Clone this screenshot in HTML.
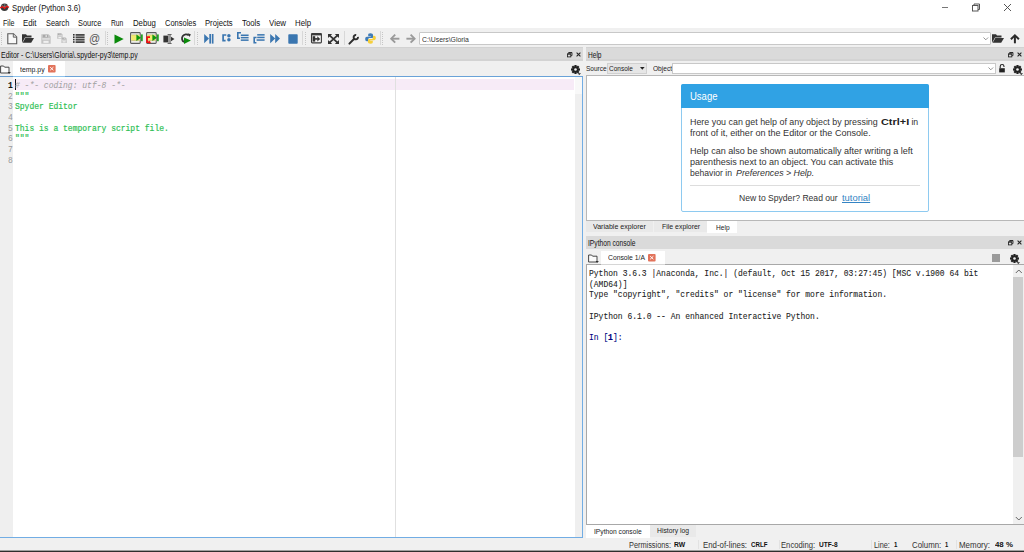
<!DOCTYPE html>
<html><head><meta charset="utf-8"><title>Spyder (Python 3.6)</title>
<style>
html,body{margin:0;padding:0;}
body{width:1024px;height:552px;overflow:hidden;position:relative;background:#f0f0f0;font-family:"Liberation Sans",sans-serif;}
.t{position:absolute;white-space:pre;line-height:1;transform-origin:0 0;}
.r{position:absolute;}
svg.r{overflow:visible;}
</style></head><body>
<div class="titlebar">
<div class="r" style="left:0px;top:0px;width:1024px;height:28px;background:#ffffff;"></div>
<svg class="r" style="left:0px;top:3px" width="10" height="9" viewBox="0 0 10 9"><circle cx="4.5" cy="4.2" r="3.8" fill="#3a3a3a"/><path d="M1.5 2.2 L4.8 4.2 M8 2.2 L4.8 4.2 M4.8 0.5 V4.2" stroke="#bbb" stroke-width="0.5"/><path d="M0 5 L2.6 3.6 L4.6 5.4 L6.6 3.2 L9 4.4" stroke="#e81818" stroke-width="1.3" fill="none"/></svg>
<div class="t" style="left:12.30px;top:4px;font-size:8.60px;color:#111;transform:scaleX(0.8969);">Spyder (Python 3.6)</div>
<div class="r" style="left:941.6px;top:6.5px;width:6.4px;height:1px;background:#777;"></div>
<svg class="r" style="left:971px;top:3px" width="10" height="9" viewBox="0 0 10 9"><rect x="1.5" y="2.5" width="5.5" height="5.5" fill="none" stroke="#555" stroke-width="1"/><path d="M3 2.5 V1 H8.5 V6.5 H7" fill="none" stroke="#555" stroke-width="1"/></svg>
<svg class="r" style="left:1003px;top:3px" width="9" height="9" viewBox="0 0 9 9"><path d="M1 1 L8 8 M8 1 L1 8" stroke="#444" stroke-width="0.9"/></svg>
</div>
<div class="menubar">
<div class="t" style="left:2.60px;top:19px;font-size:8.50px;color:#111;transform:scaleX(0.8323);">File</div>
<div class="t" style="left:23.40px;top:19px;font-size:8.50px;color:#111;transform:scaleX(0.9217);">Edit</div>
<div class="t" style="left:45.70px;top:19px;font-size:8.50px;color:#111;transform:scaleX(0.8614);">Search</div>
<div class="t" style="left:77.60px;top:19px;font-size:8.50px;color:#111;transform:scaleX(0.8688);">Source</div>
<div class="t" style="left:110.60px;top:19px;font-size:8.50px;color:#111;transform:scaleX(0.7888);">Run</div>
<div class="t" style="left:132.80px;top:19px;font-size:8.50px;color:#111;transform:scaleX(0.9142);">Debug</div>
<div class="t" style="left:164.80px;top:19px;font-size:8.50px;color:#111;transform:scaleX(0.8833);">Consoles</div>
<div class="t" style="left:204.90px;top:19px;font-size:8.50px;color:#111;transform:scaleX(0.9021);">Projects</div>
<div class="t" style="left:241.60px;top:19px;font-size:8.50px;color:#111;transform:scaleX(0.9172);">Tools</div>
<div class="t" style="left:268.60px;top:19px;font-size:8.50px;color:#111;transform:scaleX(0.9304);">View</div>
<div class="t" style="left:294.70px;top:19px;font-size:8.50px;color:#111;transform:scaleX(0.9209);">Help</div>
</div>
<div class="toolbar">
<div class="r" style="left:0px;top:28px;width:1024px;height:19px;background:#f0f0f0;"></div>
<svg class="r" style="left:1px;top:31px" width="2" height="14" viewBox="0 0 2 14"><rect x="0" y="1" width="1" height="1" fill="#c6c6c6"/><rect x="0" y="3" width="1" height="1" fill="#c6c6c6"/><rect x="0" y="5" width="1" height="1" fill="#c6c6c6"/><rect x="0" y="7" width="1" height="1" fill="#c6c6c6"/><rect x="0" y="9" width="1" height="1" fill="#c6c6c6"/><rect x="0" y="11" width="1" height="1" fill="#c6c6c6"/><rect x="0" y="13" width="1" height="1" fill="#c6c6c6"/></svg>
<svg class="r" style="left:7px;top:33px" width="11" height="12" viewBox="0 0 11 12"><path d="M0.8 0.8 H6.5 L9.7 4 V10.7 H0.8 Z" fill="#f8f8f8" stroke="#585858" stroke-width="1.1"/><path d="M6.3 0.8 V4.2 H9.7" fill="#dcdcdc" stroke="#585858" stroke-width="0.9"/></svg>
<svg class="r" style="left:22px;top:34px" width="12" height="9" viewBox="0 0 12 9"><path d="M0 0.3 H4 L5 1.5 H9.5 V3.5 H3 L0 8.7 Z" fill="#333"/><path d="M3.3 4 H12 L9.2 8.7 H0.6 Z" fill="#333"/></svg>
<svg class="r" style="left:40.5px;top:34px" width="10" height="10" viewBox="0 0 10 10"><path d="M0.3 0.3 H7.6 L9.7 2.4 V9.7 H0.3 Z" fill="#c4c4c4"/><rect x="2" y="0.8" width="5" height="2.6" fill="#a9a9a9"/><rect x="4.6" y="1.1" width="1.1" height="1.9" fill="#f2f2f2"/><rect x="1.2" y="4.4" width="7.6" height="1.1" fill="#ececec"/><rect x="2.4" y="6.8" width="5.2" height="2.1" fill="#f0f0f0"/></svg>
<svg class="r" style="left:57px;top:33.2px" width="10" height="11" viewBox="0 0 10 11"><g transform="translate(0 0) scale(0.58)"><path d="M0.3 0.3 H7.6 L9.7 2.4 V9.7 H0.3 Z" fill="#c4c4c4"/><rect x="2" y="0.8" width="5" height="2.6" fill="#a9a9a9"/><rect x="4.6" y="1.1" width="1.1" height="1.9" fill="#f2f2f2"/><rect x="1.2" y="4.4" width="7.6" height="1.1" fill="#ececec"/><rect x="2.4" y="6.8" width="5.2" height="2.1" fill="#f0f0f0"/></g><g transform="translate(4.2 4.3) scale(0.58)"><path d="M0.3 0.3 H7.6 L9.7 2.4 V9.7 H0.3 Z" fill="#c4c4c4"/><rect x="2" y="0.8" width="5" height="2.6" fill="#a9a9a9"/><rect x="4.6" y="1.1" width="1.1" height="1.9" fill="#f2f2f2"/><rect x="1.2" y="4.4" width="7.6" height="1.1" fill="#ececec"/><rect x="2.4" y="6.8" width="5.2" height="2.1" fill="#f0f0f0"/></g></svg>
<svg class="r" style="left:72.5px;top:34px" width="12" height="9" viewBox="0 0 12 9"><rect x="0" y="0" width="1.6" height="1.6" fill="#333"/><rect x="2.6" y="0" width="9" height="1.8" fill="#484848"/><rect x="0" y="2.4" width="1.6" height="1.6" fill="#333"/><rect x="2.6" y="2.4" width="9" height="1.8" fill="#484848"/><rect x="0" y="4.8" width="1.6" height="1.6" fill="#333"/><rect x="2.6" y="4.8" width="9" height="1.8" fill="#484848"/><rect x="0" y="7.2" width="1.6" height="1.6" fill="#333"/><rect x="2.6" y="7.2" width="9" height="1.8" fill="#484848"/></svg>
<div class="t" style="left:89.30px;top:33px;font-size:12.50px;color:#5a5a5a;transform:scaleX(0.8826);">@</div>
<div class="r" style="left:104.5px;top:31px;width:1px;height:14px;background:#d8d8d8;"></div>
<svg class="r" style="left:107px;top:31px" width="2" height="14" viewBox="0 0 2 14"><rect x="0" y="1" width="1" height="1" fill="#c6c6c6"/><rect x="0" y="3" width="1" height="1" fill="#c6c6c6"/><rect x="0" y="5" width="1" height="1" fill="#c6c6c6"/><rect x="0" y="7" width="1" height="1" fill="#c6c6c6"/><rect x="0" y="9" width="1" height="1" fill="#c6c6c6"/><rect x="0" y="11" width="1" height="1" fill="#c6c6c6"/><rect x="0" y="13" width="1" height="1" fill="#c6c6c6"/></svg>
<svg class="r" style="left:113.5px;top:33.5px" width="10" height="10" viewBox="0 0 10 10"><path d="M0.5 0.4 L9.7 5 L0.5 9.7 Z" fill="#0b8a0b"/></svg>
<svg class="r" style="left:129.5px;top:32px" width="13" height="12" viewBox="0 0 13 12"><rect x="0.6" y="0.6" width="9.6" height="10.8" rx="0.8" fill="#f4f4f4" stroke="#5a5a5a" stroke-width="1.1"/><rect x="1.2" y="3" width="8.4" height="5.6" fill="#f2ea6e"/><rect x="1.2" y="2.6" width="8.4" height="0.6" fill="#b8b060"/><rect x="1.2" y="8.5" width="8.4" height="0.6" fill="#b8b060"/><path d="M6.4 2.6 L11 5.8 L6.4 9 Z" fill="#0f960f"/><rect x="11.1" y="2.4" width="1.6" height="6.8" fill="#0f960f"/></svg>
<svg class="r" style="left:146px;top:32px" width="13" height="12" viewBox="0 0 13 12"><rect x="0.6" y="0.6" width="9.6" height="10.8" rx="0.8" fill="#f4f4f4" stroke="#5a5a5a" stroke-width="1.1"/><rect x="1.2" y="3" width="8.4" height="5.6" fill="#f2ea6e"/><rect x="1.2" y="2.6" width="8.4" height="0.6" fill="#b8b060"/><rect x="1.2" y="8.5" width="8.4" height="0.6" fill="#b8b060"/><path d="M6.4 2.6 L11 5.8 L6.4 9 Z" fill="#0f960f"/><rect x="11.1" y="2.4" width="1.6" height="6.8" fill="#0f960f"/><path d="M4 5.2 H1.1 V10.2 H3.2" fill="none" stroke="#f41010" stroke-width="1.7"/><path d="M3 8.5 L5 10.2 L3 11.9 Z" fill="#f41010"/></svg>
<svg class="r" style="left:162.5px;top:33.5px" width="12" height="10" viewBox="0 0 12 10"><rect x="0.4" y="1.6" width="5" height="6.8" fill="#333"/><rect x="5.2" y="0.5" width="2.8" height="9" fill="#9a9a9a"/><rect x="4.6" y="0" width="4" height="1" fill="#666"/><rect x="4.6" y="9" width="4" height="1" fill="#666"/><path d="M8 2.8 L11.5 5 L8 7.2 Z" fill="#333"/></svg>
<svg class="r" style="left:180.5px;top:32.5px" width="11" height="12" viewBox="0 0 11 12"><path d="M7.8 2.4 A4.1 4.1 0 1 0 3.0 9.0" fill="none" stroke="#333" stroke-width="1.8"/><path d="M6.6 0.3 L9.8 1.2 L8.6 4 Z" fill="#333"/><path d="M3 4.5 L9.9 7.6 L3 11 Z" fill="#0b8a0b"/></svg>
<div class="r" style="left:194.3px;top:31px;width:1px;height:14px;background:#d8d8d8;"></div>
<svg class="r" style="left:197px;top:31px" width="2" height="14" viewBox="0 0 2 14"><rect x="0" y="1" width="1" height="1" fill="#c6c6c6"/><rect x="0" y="3" width="1" height="1" fill="#c6c6c6"/><rect x="0" y="5" width="1" height="1" fill="#c6c6c6"/><rect x="0" y="7" width="1" height="1" fill="#c6c6c6"/><rect x="0" y="9" width="1" height="1" fill="#c6c6c6"/><rect x="0" y="11" width="1" height="1" fill="#c6c6c6"/><rect x="0" y="13" width="1" height="1" fill="#c6c6c6"/></svg>
<svg class="r" style="left:203.5px;top:34px" width="10" height="10" viewBox="0 0 10 10"><path d="M0.2 0 L5 4.6 L0.2 9.2 Z" fill="#3a76b0"/><rect x="5.3" y="0" width="1.7" height="9.6" fill="#3a76b0"/><rect x="7.8" y="0" width="1.7" height="9.6" fill="#3a76b0"/></svg>
<svg class="r" style="left:221.5px;top:34px" width="9" height="8" viewBox="0 0 9 8"><path d="M4.3 1 H1.1 V6.6 H3.6" fill="none" stroke="#3a76b0" stroke-width="1.7"/><circle cx="6.9" cy="1.8" r="1.75" fill="#3a76b0"/><circle cx="6.9" cy="5.8" r="1.75" fill="#3a76b0"/></svg>
<svg class="r" style="left:236.5px;top:32px" width="12" height="10" viewBox="0 0 12 10"><path d="M4 0.8 H0.8 V6.3 H3" fill="none" stroke="#3a76b0" stroke-width="1.6"/><rect x="3.8" y="2.5" width="7.8" height="1.5" fill="#3a76b0"/><rect x="3.8" y="4.9" width="7.8" height="1.5" fill="#3a76b0"/><rect x="3.8" y="7.4" width="7.8" height="1.5" fill="#3a76b0"/></svg>
<svg class="r" style="left:253px;top:34px" width="12" height="10" viewBox="0 0 12 10"><rect x="4.2" y="0.1" width="7.4" height="1.5" fill="#3a76b0"/><rect x="4.2" y="2.7" width="7.4" height="1.5" fill="#3a76b0"/><rect x="3.6" y="5.3" width="8" height="1.5" fill="#3a76b0"/><path d="M3.6 3.5 H1.2 V8.8 H3.4" fill="none" stroke="#3a76b0" stroke-width="1.6"/></svg>
<svg class="r" style="left:270px;top:34px" width="10" height="10" viewBox="0 0 10 10"><path d="M0.2 0 L5.2 4.6 L0.2 9.2 Z M5.2 0 L10 4.6 L5.2 9.2 Z" fill="#3a76b0"/></svg>
<svg class="r" style="left:287.5px;top:33.7px" width="10" height="10" viewBox="0 0 10 10"><rect x="0.3" y="0.2" width="9.4" height="9.6" rx="0.8" fill="#3a76b0"/></svg>
<div class="r" style="left:301.6px;top:31px;width:1px;height:14px;background:#d8d8d8;"></div>
<svg class="r" style="left:304.5px;top:31px" width="2" height="14" viewBox="0 0 2 14"><rect x="0" y="1" width="1" height="1" fill="#c6c6c6"/><rect x="0" y="3" width="1" height="1" fill="#c6c6c6"/><rect x="0" y="5" width="1" height="1" fill="#c6c6c6"/><rect x="0" y="7" width="1" height="1" fill="#c6c6c6"/><rect x="0" y="9" width="1" height="1" fill="#c6c6c6"/><rect x="0" y="11" width="1" height="1" fill="#c6c6c6"/><rect x="0" y="13" width="1" height="1" fill="#c6c6c6"/></svg>
<svg class="r" style="left:310.5px;top:32.8px" width="11" height="11" viewBox="0 0 11 11"><rect x="0.5" y="0.5" width="9.9" height="9.4" rx="0.8" fill="#f2f2f2" stroke="#3a3a3a" stroke-width="1.1"/><rect x="0.5" y="0.5" width="9.9" height="1.9" fill="#3a3a3a"/><rect x="1.6" y="3.2" width="2.6" height="5.4" fill="#303030"/><rect x="4" y="5.1" width="2.8" height="1.6" fill="#303030"/><path d="M6.3 3.2 L9.2 5.9 L6.3 8.6 Z" fill="#303030"/></svg>
<svg class="r" style="left:327.8px;top:33.8px" width="11" height="10" viewBox="0 0 11 10"><path d="M1.5 1.4 L9.5 8.6 M9.5 1.4 L1.5 8.6" stroke="#333" stroke-width="1.8"/><path d="M0 0 H4.2 L0 3.9 Z M11 0 H6.8 L11 3.9 Z M0 10 H4.2 L0 6.1 Z M11 10 H6.8 L11 6.1 Z" fill="#333"/></svg>
<div class="r" style="left:343.5px;top:31px;width:1px;height:14px;background:#d8d8d8;"></div>
<svg class="r" style="left:347.8px;top:33.8px" width="11" height="11" viewBox="0 0 11 11"><path d="M1.4 9.6 L6.2 4.8" stroke="#2e2e2e" stroke-width="2" stroke-linecap="round"/><path d="M9.97 2.82 A2.2 2.2 0 1 1 8.18 1.03" fill="none" stroke="#2e2e2e" stroke-width="1.9"/></svg>
<svg class="r" style="left:364.5px;top:33.2px" width="11" height="11" viewBox="0 0 11 11"><path d="M5.4 0.3 C3.3 0.3 3.2 1.2 3.2 2 V3.3 H5.8 V3.8 H1.9 C0.9 3.8 0.2 4.6 0.2 6 C0.2 7.5 0.9 8.2 1.8 8.2 H3 V6.6 C3 5.6 3.8 5 4.8 5 H7.1 C7.9 5 8 4.4 8 3.7 V2 C8 1 7.2 0.3 5.4 0.3 Z" fill="#3f7cb8"/><path d="M5.6 10.7 C7.7 10.7 7.8 9.8 7.8 9 V7.7 H5.2 V7.2 H9.1 C10.1 7.2 10.8 6.4 10.8 5 C10.8 3.5 10.1 2.8 9.2 2.8 H8 V4.4 C8 5.4 7.2 6 6.2 6 H3.9 C3.1 6 3 6.6 3 7.3 V9 C3 10 3.8 10.7 5.6 10.7 Z" fill="#f5cf3c"/></svg>
<div class="r" style="left:379.8px;top:31px;width:1px;height:14px;background:#d8d8d8;"></div>
<svg class="r" style="left:382.3px;top:31px" width="2" height="14" viewBox="0 0 2 14"><rect x="0" y="1" width="1" height="1" fill="#c6c6c6"/><rect x="0" y="3" width="1" height="1" fill="#c6c6c6"/><rect x="0" y="5" width="1" height="1" fill="#c6c6c6"/><rect x="0" y="7" width="1" height="1" fill="#c6c6c6"/><rect x="0" y="9" width="1" height="1" fill="#c6c6c6"/><rect x="0" y="11" width="1" height="1" fill="#c6c6c6"/><rect x="0" y="13" width="1" height="1" fill="#c6c6c6"/></svg>
<svg class="r" style="left:389.5px;top:34.3px" width="10" height="10" viewBox="0 0 10 10"><path d="M9.4 4.7 H2" stroke="#9a9a9a" stroke-width="1.9"/><path d="M5.2 0.7 L1.2 4.7 L5.2 8.7" fill="none" stroke="#9a9a9a" stroke-width="1.9"/></svg>
<svg class="r" style="left:405.5px;top:34.3px" width="10" height="10" viewBox="0 0 10 10"><path d="M0.4 4.7 H7.8" stroke="#9a9a9a" stroke-width="1.9"/><path d="M4.6 0.7 L8.6 4.7 L4.6 8.7" fill="none" stroke="#9a9a9a" stroke-width="1.9"/></svg>
<div class="r" style="left:419px;top:32px;width:572px;height:13px;background:#fff;border:1px solid #c8c8c8;box-sizing:border-box;border-radius:1px;"></div>
<div class="t" style="left:422.00px;top:36px;font-size:8.00px;color:#333;transform:scaleX(0.8578);">C:\Users\Gloria</div>
<svg class="r" style="left:982.5px;top:37px" width="6" height="4" viewBox="0 0 6 4"><path d="M0.5 0.5 L2.8 2.8 L5.1 0.5" fill="none" stroke="#777" stroke-width="0.8"/></svg>
<svg class="r" style="left:992px;top:33.8px" width="12" height="9" viewBox="0 0 12 9"><path d="M0 0.3 H4 L5 1.5 H9.5 V3.5 H3 L0 8.7 Z" fill="#333"/><path d="M3.3 4 H12 L9.2 8.7 H0.6 Z" fill="#333"/></svg>
<svg class="r" style="left:1009.8px;top:34px" width="10" height="10" viewBox="0 0 10 10"><path d="M4.9 9.3 V1.8" stroke="#2a2a2a" stroke-width="2"/><path d="M0.9 5.3 L4.9 1.3 L8.9 5.3" fill="none" stroke="#2a2a2a" stroke-width="2"/></svg>
</div>
<div class="editor-pane">
<div class="r" style="left:0px;top:47px;width:583px;height:13.5px;background:#dadada;"></div>
<div class="r" style="left:0px;top:47px;width:583px;height:1px;background:#d2d2d2;"></div>
<div class="r" style="left:0px;top:59px;width:583px;height:1.5px;background:#d3d3d3;"></div>
<div class="t" style="left:0.70px;top:52px;font-size:8.20px;color:#111;transform:scaleX(0.8486);">Editor - C:\Users\Gloria\.spyder-py3\temp.py</div>
<svg class="r" style="left:566.5px;top:52px" width="6" height="6" viewBox="0 0 6 6"><rect x="0.5" y="1.9" width="3.3" height="3" fill="none" stroke="#222" stroke-width="0.85"/><rect x="0.5" y="1.6" width="3.3" height="0.9" fill="#222"/><path d="M1.7 1.5 V0.5 H5 V3.6 H3.9" fill="none" stroke="#222" stroke-width="0.85"/><rect x="1.7" y="0.3" width="3.3" height="0.9" fill="#222"/></svg>
<svg class="r" style="left:576.0px;top:52px" width="6" height="6" viewBox="0 0 6 6"><path d="M0.6 0.6 L4.4 4.4 M4.4 0.6 L0.6 4.4" stroke="#222" stroke-width="1.05"/></svg>
</div>
<div class="help-pane">
<div class="r" style="left:585.5px;top:47px;width:438.5px;height:13.5px;background:#dadada;"></div>
<div class="r" style="left:585.5px;top:47px;width:438.5px;height:1px;background:#d2d2d2;"></div>
<div class="r" style="left:585.5px;top:59px;width:438.5px;height:1.5px;background:#d3d3d3;"></div>
<div class="t" style="left:588.00px;top:52px;font-size:8.20px;color:#111;transform:scaleX(0.8005);">Help</div>
<svg class="r" style="left:1007.5px;top:52px" width="6" height="6" viewBox="0 0 6 6"><rect x="0.5" y="1.9" width="3.3" height="3" fill="none" stroke="#222" stroke-width="0.85"/><rect x="0.5" y="1.6" width="3.3" height="0.9" fill="#222"/><path d="M1.7 1.5 V0.5 H5 V3.6 H3.9" fill="none" stroke="#222" stroke-width="0.85"/><rect x="1.7" y="0.3" width="3.3" height="0.9" fill="#222"/></svg>
<svg class="r" style="left:1017.0px;top:52px" width="6" height="6" viewBox="0 0 6 6"><path d="M0.6 0.6 L4.4 4.4 M4.4 0.6 L0.6 4.4" stroke="#222" stroke-width="1.05"/></svg>
</div>
<div class="editor-pane">
<svg class="r" style="left:0px;top:64.5px" width="10" height="9" viewBox="0 0 10 9"><path d="M0.6 1 H3.6 L4.6 2.2 H9 V8 H0.6 Z" fill="#fafafa" stroke="#333" stroke-width="0.9"/><path d="M7.6 7.3 L9.3 8.8 L10.9 7.3 Z" fill="#111"/></svg>
<div class="r" style="left:13px;top:61px;width:52px;height:15.5px;background:#ffffff;"></div>
<div class="t" style="left:20.30px;top:66px;font-size:8.00px;color:#222;transform:scaleX(0.8644);">temp.py</div>
<svg class="r" style="left:48px;top:65.2px" width="8" height="8" viewBox="0 0 8 8"><rect x="0" y="0" width="7.6" height="7.4" rx="1" fill="#e2735b"/><path d="M2.2 2.2 L5.4 5.2 M5.4 2.2 L2.2 5.2" stroke="#fff" stroke-width="1"/></svg>
<svg class="r" style="left:570.5px;top:64.6px" width="11" height="11" viewBox="0 0 11 11"><rect x="3.4" y="0" width="2.2" height="2.4" fill="#222" transform="rotate(0 4.5 4.5)"/><rect x="3.4" y="0" width="2.2" height="2.4" fill="#222" transform="rotate(45 4.5 4.5)"/><rect x="3.4" y="0" width="2.2" height="2.4" fill="#222" transform="rotate(90 4.5 4.5)"/><rect x="3.4" y="0" width="2.2" height="2.4" fill="#222" transform="rotate(135 4.5 4.5)"/><rect x="3.4" y="0" width="2.2" height="2.4" fill="#222" transform="rotate(180 4.5 4.5)"/><rect x="3.4" y="0" width="2.2" height="2.4" fill="#222" transform="rotate(225 4.5 4.5)"/><rect x="3.4" y="0" width="2.2" height="2.4" fill="#222" transform="rotate(270 4.5 4.5)"/><rect x="3.4" y="0" width="2.2" height="2.4" fill="#222" transform="rotate(315 4.5 4.5)"/><circle cx="4.5" cy="4.5" r="3.2" fill="#222"/><circle cx="4.5" cy="4.5" r="1.3" fill="#f0f0f0"/><path d="M6.6 8.2 L10 8.2 L8.3 10 Z" fill="#222"/></svg>
<div class="r" style="left:0px;top:76px;width:583px;height:462px;background:#72ade4;"></div>
<div class="r" style="left:0px;top:76px;width:13px;height:1px;background:#6499cc;"></div>
<div class="r" style="left:65px;top:76px;width:518px;height:1px;background:#6aa2d8;"></div>
<div class="r" style="left:13px;top:76px;width:52px;height:1px;background:#8ec2ec;"></div>
<div class="r" style="left:0px;top:77px;width:582px;height:460px;background:#ffffff;"></div>
<div class="r" style="left:0px;top:77px;width:13px;height:460px;background:#efefef;"></div>
<div class="r" style="left:13px;top:79px;width:561px;height:10.6px;background:#f7ebf7;"></div>
<div class="r" style="left:395px;top:77px;width:1px;height:460px;background:#e0e0e0;"></div>
<div class="r" style="left:575px;top:77px;width:7px;height:460px;background:#efefef;"></div>
<div class="r" style="left:575px;top:77px;width:7px;height:17px;background:#f8f8f8;"></div>
<div class="r" style="left:15px;top:79px;width:1px;height:10.6px;background:#111;"></div>
<div class="t" style="left:7.80px;top:82px;font-size:8.60px;color:#111;font-weight:bold;font-family:'Liberation Mono',monospace;-webkit-text-stroke:0.10px #111;transform:scaleX(0.9320);">1</div>
<div class="t" style="left:8.00px;top:93px;font-size:8.60px;color:#999;font-family:'Liberation Mono',monospace;-webkit-text-stroke:0.00px #999;transform:scaleX(0.9320);">2</div>
<div class="t" style="left:8.00px;top:103px;font-size:8.60px;color:#999;font-family:'Liberation Mono',monospace;-webkit-text-stroke:0.00px #999;transform:scaleX(0.9320);">3</div>
<div class="t" style="left:8.00px;top:114px;font-size:8.60px;color:#999;font-family:'Liberation Mono',monospace;-webkit-text-stroke:0.00px #999;transform:scaleX(0.9320);">4</div>
<div class="t" style="left:8.00px;top:125px;font-size:8.60px;color:#999;font-family:'Liberation Mono',monospace;-webkit-text-stroke:0.00px #999;transform:scaleX(0.9320);">5</div>
<div class="t" style="left:8.00px;top:135px;font-size:8.60px;color:#999;font-family:'Liberation Mono',monospace;-webkit-text-stroke:0.00px #999;transform:scaleX(0.9320);">6</div>
<div class="t" style="left:8.00px;top:146px;font-size:8.60px;color:#999;font-family:'Liberation Mono',monospace;-webkit-text-stroke:0.00px #999;transform:scaleX(0.9320);">7</div>
<div class="t" style="left:8.00px;top:157px;font-size:8.60px;color:#999;font-family:'Liberation Mono',monospace;-webkit-text-stroke:0.00px #999;transform:scaleX(0.9320);">8</div>
<div class="t" style="left:15.30px;top:82px;font-size:8.60px;color:#a4a4a4;font-style:italic;font-family:'Liberation Mono',monospace;-webkit-text-stroke:0.05px #a4a4a4;transform:scaleX(0.9320);"># -*- coding: utf-8 -*-</div>
<div class="t" style="left:15.00px;top:93px;font-size:8.60px;color:#30bf55;font-family:'Liberation Mono',monospace;-webkit-text-stroke:0.20px #30bf55;transform:scaleX(0.9320);">&quot;&quot;&quot;</div>
<div class="t" style="left:15.00px;top:103px;font-size:8.60px;color:#30bf55;font-family:'Liberation Mono',monospace;-webkit-text-stroke:0.20px #30bf55;transform:scaleX(0.9320);">Spyder Editor</div>
<div class="t" style="left:15.00px;top:125px;font-size:8.60px;color:#30bf55;font-family:'Liberation Mono',monospace;-webkit-text-stroke:0.20px #30bf55;transform:scaleX(0.9320);">This is a temporary script file.</div>
<div class="t" style="left:15.00px;top:135px;font-size:8.60px;color:#30bf55;font-family:'Liberation Mono',monospace;-webkit-text-stroke:0.20px #30bf55;transform:scaleX(0.9320);">&quot;&quot;&quot;</div>
</div>
<div class="help-pane">
<div class="t" style="left:585.80px;top:65px;font-size:8.00px;color:#222;transform:scaleX(0.8166);">Source</div>
<div class="r" style="left:607px;top:62.5px;width:40px;height:11.5px;background:#e6e6e6;border:1px solid #d0d0d0;box-sizing:border-box;"></div>
<div class="t" style="left:609.20px;top:65px;font-size:8.00px;color:#222;transform:scaleX(0.8108);">Console</div>
<svg class="r" style="left:639.5px;top:66.5px" width="5" height="4" viewBox="0 0 5 4"><path d="M0 0 H4.6 L2.3 2.8 Z" fill="#222"/></svg>
<div class="t" style="left:652.90px;top:65px;font-size:8.00px;color:#222;transform:scaleX(0.8218);">Object</div>
<div class="r" style="left:672px;top:62.5px;width:324px;height:11.5px;background:#ffffff;border:1px solid #c8c8c8;box-sizing:border-box;"></div>
<svg class="r" style="left:987.5px;top:67px" width="6" height="4" viewBox="0 0 6 4"><path d="M0.5 0.5 L2.8 2.8 L5.1 0.5" fill="none" stroke="#777" stroke-width="0.8"/></svg>
<svg class="r" style="left:999px;top:63.5px" width="7" height="9" viewBox="0 0 7 9"><path d="M1.2 4 V2.4 A1.9 1.9 0 0 1 5 2.4 V3" fill="none" stroke="#222" stroke-width="1.1"/><rect x="0.2" y="4.2" width="5.6" height="4.2" fill="#222"/></svg>
<svg class="r" style="left:1012.5px;top:64.5px" width="11" height="11" viewBox="0 0 11 11"><rect x="3.4" y="0" width="2.2" height="2.4" fill="#222" transform="rotate(0 4.5 4.5)"/><rect x="3.4" y="0" width="2.2" height="2.4" fill="#222" transform="rotate(45 4.5 4.5)"/><rect x="3.4" y="0" width="2.2" height="2.4" fill="#222" transform="rotate(90 4.5 4.5)"/><rect x="3.4" y="0" width="2.2" height="2.4" fill="#222" transform="rotate(135 4.5 4.5)"/><rect x="3.4" y="0" width="2.2" height="2.4" fill="#222" transform="rotate(180 4.5 4.5)"/><rect x="3.4" y="0" width="2.2" height="2.4" fill="#222" transform="rotate(225 4.5 4.5)"/><rect x="3.4" y="0" width="2.2" height="2.4" fill="#222" transform="rotate(270 4.5 4.5)"/><rect x="3.4" y="0" width="2.2" height="2.4" fill="#222" transform="rotate(315 4.5 4.5)"/><circle cx="4.5" cy="4.5" r="3.2" fill="#222"/><circle cx="4.5" cy="4.5" r="1.3" fill="#f0f0f0"/><path d="M6.6 8.2 L10 8.2 L8.3 10 Z" fill="#222"/></svg>
<div class="r" style="left:585.5px;top:75.2px;width:438.5px;height:145.5px;background:#ffffff;border:1px solid #b8b8b8;box-sizing:border-box;border-right:none;"></div>
<div class="r" style="left:681px;top:83.5px;width:248px;height:128px;background:#ffffff;border:1px solid #8ecaf0;box-sizing:border-box;border-radius:2px;"></div>
<div class="r" style="left:681px;top:83.5px;width:248px;height:24px;background:#30a2e4;border-radius:2px 2px 0 0;"></div>
<div class="t" style="left:689.80px;top:92px;font-size:10.20px;color:#ffffff;transform:scaleX(0.9327);">Usage</div>
<div class="t" style="left:690.10px;top:118px;font-size:8.70px;color:#333;transform:scaleX(1.0231);">Here you can get help of any object by pressing </div>
<div class="t" style="left:880.60px;top:118px;font-size:8.70px;color:#222;font-weight:bold;transform:scaleX(1.2544);">Ctrl+I</div>
<div class="t" style="left:911.40px;top:118px;font-size:8.70px;color:#333;">in</div>
<div class="t" style="left:690.10px;top:129px;font-size:8.70px;color:#333;transform:scaleX(1.0420);">front of it, either on the Editor or the Console.</div>
<div class="t" style="left:690.10px;top:147px;font-size:8.70px;color:#333;transform:scaleX(1.0419);">Help can also be shown automatically after writing a left</div>
<div class="t" style="left:690.10px;top:158px;font-size:8.70px;color:#333;transform:scaleX(1.0420);">parenthesis next to an object. You can activate this</div>
<div class="t" style="left:690.10px;top:169px;font-size:8.70px;color:#333;transform:scaleX(0.9893);">behavior in </div>
<div class="t" style="left:735.50px;top:169px;font-size:8.70px;color:#333;font-style:italic;transform:scaleX(1.0151);">Preferences &gt; Help.</div>
<div class="r" style="left:690px;top:185px;width:230px;height:1px;background:#dddddd;"></div>
<div class="t" style="left:739.10px;top:194px;font-size:8.70px;color:#333;transform:scaleX(0.9871);">New to Spyder? Read our </div>
<div class="t" style="left:842.30px;top:194px;font-size:8.70px;color:#3484c4;transform:scaleX(1.0799);text-decoration:underline;">tutorial</div>
<div class="r" style="left:586px;top:220.5px;width:67px;height:11.3px;background:#e9e9e9;"></div>
<div class="t" style="left:593.40px;top:223px;font-size:8.00px;color:#222;transform:scaleX(0.8817);">Variable explorer</div>
<div class="r" style="left:653.8px;top:220.5px;width:53px;height:11.3px;background:#e9e9e9;"></div>
<div class="t" style="left:661.80px;top:223px;font-size:8.00px;color:#222;transform:scaleX(0.8656);">File explorer</div>
<div class="r" style="left:707px;top:220.5px;width:29.5px;height:12px;background:#ffffff;"></div>
<div class="t" style="left:715.70px;top:224px;font-size:8.00px;color:#222;transform:scaleX(0.8266);">Help</div>
</div>
<div class="console-pane">
<div class="r" style="left:585.5px;top:236px;width:438.5px;height:12.5px;background:#dadada;"></div>
<div class="t" style="left:588.30px;top:240px;font-size:8.20px;color:#111;transform:scaleX(0.8141);">IPython console</div>
<svg class="r" style="left:1007.5px;top:240px" width="6" height="6" viewBox="0 0 6 6"><rect x="0.5" y="1.9" width="3.3" height="3" fill="none" stroke="#222" stroke-width="0.85"/><rect x="0.5" y="1.6" width="3.3" height="0.9" fill="#222"/><path d="M1.7 1.5 V0.5 H5 V3.6 H3.9" fill="none" stroke="#222" stroke-width="0.85"/><rect x="1.7" y="0.3" width="3.3" height="0.9" fill="#222"/></svg>
<svg class="r" style="left:1017.0px;top:240px" width="6" height="6" viewBox="0 0 6 6"><path d="M0.6 0.6 L4.4 4.4 M4.4 0.6 L0.6 4.4" stroke="#222" stroke-width="1.05"/></svg>
<svg class="r" style="left:587.5px;top:253.5px" width="10" height="9" viewBox="0 0 10 9"><path d="M0.6 1 H3.6 L4.6 2.2 H9 V8 H0.6 Z" fill="#fafafa" stroke="#333" stroke-width="0.9"/><path d="M7.6 7.3 L9.3 8.8 L10.9 7.3 Z" fill="#111"/></svg>
<div class="r" style="left:600.5px;top:250.5px;width:64.5px;height:14px;background:#ffffff;"></div>
<div class="t" style="left:608.00px;top:254px;font-size:8.00px;color:#222;transform:scaleX(0.8467);">Console 1/A</div>
<svg class="r" style="left:648px;top:253.6px" width="8" height="8" viewBox="0 0 8 8"><rect x="0" y="0" width="7.6" height="7.4" rx="1" fill="#e2735b"/><path d="M2.2 2.2 L5.4 5.2 M5.4 2.2 L2.2 5.2" stroke="#fff" stroke-width="1"/></svg>
<div class="r" style="left:992px;top:254px;width:7.7px;height:7.5px;background:#9a9a9a;"></div>
<svg class="r" style="left:1010px;top:254px" width="11" height="11" viewBox="0 0 11 11"><rect x="3.4" y="0" width="2.2" height="2.4" fill="#222" transform="rotate(0 4.5 4.5)"/><rect x="3.4" y="0" width="2.2" height="2.4" fill="#222" transform="rotate(45 4.5 4.5)"/><rect x="3.4" y="0" width="2.2" height="2.4" fill="#222" transform="rotate(90 4.5 4.5)"/><rect x="3.4" y="0" width="2.2" height="2.4" fill="#222" transform="rotate(135 4.5 4.5)"/><rect x="3.4" y="0" width="2.2" height="2.4" fill="#222" transform="rotate(180 4.5 4.5)"/><rect x="3.4" y="0" width="2.2" height="2.4" fill="#222" transform="rotate(225 4.5 4.5)"/><rect x="3.4" y="0" width="2.2" height="2.4" fill="#222" transform="rotate(270 4.5 4.5)"/><rect x="3.4" y="0" width="2.2" height="2.4" fill="#222" transform="rotate(315 4.5 4.5)"/><circle cx="4.5" cy="4.5" r="3.2" fill="#222"/><circle cx="4.5" cy="4.5" r="1.3" fill="#f0f0f0"/><path d="M6.6 8.2 L10 8.2 L8.3 10 Z" fill="#222"/></svg>
<div class="r" style="left:585.5px;top:264px;width:438.5px;height:261px;background:#ffffff;border:1px solid #a8a8a8;box-sizing:border-box;border-right:none;"></div>
<div class="r" style="left:600.5px;top:264px;width:64.5px;height:1px;background:#d6d6d6;"></div>
<div class="r" style="left:1013px;top:265px;width:11px;height:259px;background:#f0f0f0;"></div>
<div class="r" style="left:1013px;top:277px;width:10px;height:180px;background:#cdcdcd;"></div>
<svg class="r" style="left:1014.5px;top:268.5px" width="8" height="5" viewBox="0 0 8 5"><path d="M0.8 4 L3.8 1 L6.8 4" fill="none" stroke="#555" stroke-width="0.9"/></svg>
<svg class="r" style="left:1014.5px;top:516px" width="8" height="5" viewBox="0 0 8 5"><path d="M0.8 1 L3.8 4 L6.8 1" fill="none" stroke="#555" stroke-width="0.9"/></svg>
<div class="t" style="left:588.50px;top:270px;font-size:8.60px;color:#222;font-family:'Liberation Mono',monospace;-webkit-text-stroke:0.08px #222;transform:scaleX(0.9320);">Python 3.6.3 |Anaconda, Inc.| (default, Oct 15 2017, 03:27:45) [MSC v.1900 64 bit</div>
<div class="t" style="left:588.50px;top:281px;font-size:8.60px;color:#222;font-family:'Liberation Mono',monospace;-webkit-text-stroke:0.08px #222;transform:scaleX(0.9320);">(AMD64)]</div>
<div class="t" style="left:588.50px;top:291px;font-size:8.60px;color:#222;font-family:'Liberation Mono',monospace;-webkit-text-stroke:0.08px #222;transform:scaleX(0.9320);">Type &quot;copyright&quot;, &quot;credits&quot; or &quot;license&quot; for more information.</div>
<div class="t" style="left:588.50px;top:313px;font-size:8.60px;color:#222;font-family:'Liberation Mono',monospace;-webkit-text-stroke:0.08px #222;transform:scaleX(0.9320);">IPython 6.1.0 -- An enhanced Interactive Python.</div>
<div class="t" style="left:588.50px;top:334px;font-size:8.60px;color:#000080;font-family:'Liberation Mono',monospace;-webkit-text-stroke:0.08px #000080;transform:scaleX(0.9320);">In [</div>
<div class="t" style="left:607.70px;top:334px;font-size:8.60px;color:#000080;font-weight:bold;font-family:'Liberation Mono',monospace;-webkit-text-stroke:0.20px #000080;transform:scaleX(0.9320);">1</div>
<div class="t" style="left:612.50px;top:334px;font-size:8.60px;color:#000080;font-family:'Liberation Mono',monospace;-webkit-text-stroke:0.08px #000080;transform:scaleX(0.9320);">]:</div>
<div class="r" style="left:586px;top:524.5px;width:64px;height:13px;background:#ffffff;"></div>
<div class="t" style="left:593.60px;top:528px;font-size:8.00px;color:#222;transform:scaleX(0.8362);">IPython console</div>
<div class="r" style="left:650px;top:524.5px;width:46px;height:12px;background:#e9e9e9;"></div>
<div class="t" style="left:656.90px;top:527px;font-size:8.00px;color:#222;transform:scaleX(0.8468);">History log</div>
</div>
<div class="statusbar">
<div class="t" style="left:628.60px;top:541px;font-size:8.40px;color:#333;transform:scaleX(0.8777);">Permissions:</div>
<div class="t" style="left:674.40px;top:541px;font-size:7.30px;color:#111;font-weight:bold;transform:scaleX(0.9310);">RW</div>
<div class="r" style="left:698px;top:540px;width:1px;height:9px;background:#e2e2e2;"></div>
<div class="t" style="left:702.50px;top:541px;font-size:8.40px;color:#333;transform:scaleX(0.9352);">End-of-lines:</div>
<div class="t" style="left:750.50px;top:541px;font-size:7.30px;color:#111;font-weight:bold;transform:scaleX(0.8426);">CRLF</div>
<div class="r" style="left:778.5px;top:540px;width:1px;height:9px;background:#e2e2e2;"></div>
<div class="t" style="left:781.20px;top:541px;font-size:8.40px;color:#333;transform:scaleX(0.9154);">Encoding:</div>
<div class="t" style="left:819.10px;top:541px;font-size:7.30px;color:#111;font-weight:bold;transform:scaleX(0.8993);">UTF-8</div>
<div class="r" style="left:870.5px;top:540px;width:1px;height:9px;background:#e2e2e2;"></div>
<div class="t" style="left:873.70px;top:541px;font-size:8.40px;color:#333;transform:scaleX(0.8729);">Line:</div>
<div class="t" style="left:893.60px;top:541px;font-size:7.30px;color:#111;font-weight:bold;transform:scaleX(0.8374);">1</div>
<div class="t" style="left:911.90px;top:541px;font-size:8.40px;color:#333;transform:scaleX(0.9367);">Column:</div>
<div class="t" style="left:945.00px;top:541px;font-size:7.30px;color:#111;font-weight:bold;transform:scaleX(0.7882);">1</div>
<div class="r" style="left:955.5px;top:540px;width:1px;height:9px;background:#e2e2e2;"></div>
<div class="t" style="left:958.60px;top:541px;font-size:8.40px;color:#333;transform:scaleX(0.9489);">Memory:</div>
<div class="t" style="left:995.30px;top:541px;font-size:7.30px;color:#111;font-weight:bold;transform:scaleX(1.0758);">48 %</div>
<div class="r" style="left:0px;top:550px;width:1024px;height:1px;background:#a0a0a0;"></div>
<div class="r" style="left:0px;top:551px;width:1024px;height:1px;background:#2e2e2e;"></div>
</div>
</body></html>
